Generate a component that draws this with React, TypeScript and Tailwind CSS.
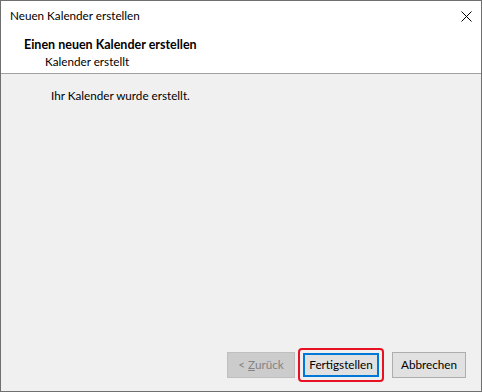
export default function App() {
  return (
    <div className="w-[482px] h-[392px] bg-[#f0f0f0] border border-[#6f6f6f] flex flex-col text-[11.7px] text-black font-['Lato',sans-serif] overflow-hidden">
      {/* Title bar */}
      <div className="h-[31px] bg-white flex items-center pl-[9px] shrink-0">
        <span className="flex-1 -mt-[1px]">Neuen Kalender erstellen</span>
        <div className="w-[30px] h-[30px] flex items-center justify-center">
          <svg width="11" height="11" viewBox="0 0 11 11">
            <path d="M0.5 0.5 L10.5 10.5 M10.5 0.5 L0.5 10.5" stroke="#000" strokeWidth="1" />
          </svg>
        </div>
      </div>

      {/* Header */}
      <div className="h-[42px] bg-white border-b border-[#a0a0a0] shrink-0 pl-[23px] pt-[5px] leading-[16px]">
        <div className="font-bold text-[12.5px]">Einen neuen Kalender erstellen</div>
        <div className="pl-[21px]">Kalender erstellt</div>
      </div>

      {/* Body */}
      <div className="flex-1 pl-[50px] pt-[13px]">
        <p>Ihr Kalender wurde erstellt.</p>
      </div>

      {/* Buttons */}
      <div className="flex items-center justify-end gap-[3px] pr-[15px] pb-[8px] h-[44px] shrink-0">
        <button className="w-[68px] h-[26px] bg-[#cccccc] border border-[#bfbfbf] text-[#838383]">
          &lt; <span className="underline">Z</span>urück
        </button>
        <div className="p-[3px] rounded-[4px] border-2 border-[#e81123]">
          <button className="w-[76px] h-[24px] bg-[#e1e1e1] border-2 border-[#0078d7]">
            Fertigstellen
          </button>
        </div>
        <button className="ml-[5px] w-[74px] h-[26px] bg-[#e1e1e1] border border-[#adadad]">
          Abbrechen
        </button>
      </div>
    </div>
  );
}
